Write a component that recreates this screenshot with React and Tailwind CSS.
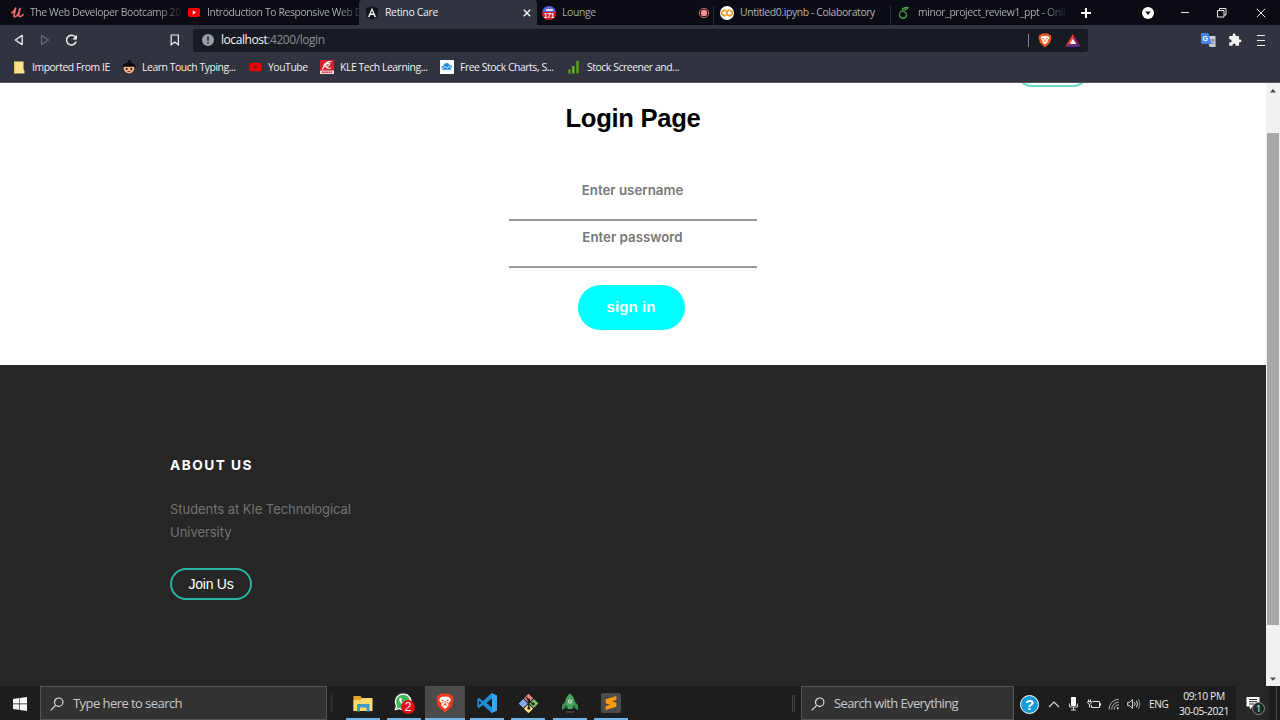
import React from "react";
import { SiGooglecolab, SiOverleaf, SiSublimetext } from "react-icons/si";
import { FaYoutube } from "react-icons/fa";

const UdemyIcon = () => (
  <svg viewBox="0 0 14 12" className="h-[11px] w-[13px]" fill="none" stroke="#f0666a" strokeWidth="1.9" strokeLinecap="round" strokeLinejoin="round">
    <path d="M1 6.200C2.600 5.400 4.400 3 4.900 1.300C4.600 4.400 1.800 10.600 4.200 10.600C6.400 10.600 8.600 6 9.800 1.600C8.700 5.500 7.300 10.400 9.600 10.400C11 10.400 12.200 9.400 13 8.400" />
  </svg>
);

const YoutubeIcon = () => (
  <svg viewBox="0 0 12 9" className="h-[9px] w-[12px]">
    <rect width="12" height="9" rx="2" fill="#f60000" />
    <path d="M4.800 2.600v3.800L8 4.500z" fill="#fff" />
  </svg>
);

const AngularIcon = () => (
  <svg viewBox="0 0 14 14" className="h-[14px] w-[14px]">
    <path d="M7 0l6.300 2.200-1 8.400L7 13.800l-5.300-3.200-1-8.400z" fill="#12161d" />
    <path d="M7 1.700L2.900 11h1.700l.85-2.100h3.100L9.400 11h1.700zm0 3l1.100 2.800H5.900z" fill="#f2f4f6" />
  </svg>
);

const LoungeIcon = () => (
  <span className="flex h-[14px] w-[14px] flex-col items-center overflow-hidden rounded-full bg-[#5b62e0]">
    <span className="mt-[3px] h-[2px] w-[7px] shrink-0 bg-[#dcdcff]" />
    <span className="mt-[1px] flex h-[8px] w-[14px] shrink-0 items-center justify-center bg-[#dc1118] font-['Liberation_Sans'] text-[7px] leading-none font-bold text-white">171</span>
  </span>
);

const ColabIcon = () => (
  <span className="flex h-[14px] w-[14px] items-center justify-center rounded-full bg-white">
    <SiGooglecolab className="h-[12px] w-[12px] text-[#f49a18]" />
  </span>
);

const RecordingDot = () => (
  <svg viewBox="0 0 12 12" className="h-[12px] w-[12px]">
    <circle cx="6" cy="6" r="4.700" fill="none" stroke="#d9706f" strokeWidth="1" />
    <circle cx="6" cy="6" r="3.200" fill="#fa8f8b" />
  </svg>
);

function Tab({ icon, label, width, pad, gap, fade = true, divider = true }) {
  return (
    <div className={`flex h-[25px] shrink-0 items-center ${width} ${pad} ${gap}`}>
      <span className="flex shrink-0">{icon}</span>
      <span
        className={
          fade
            ? "bg-linear-to-r from-[#b3b4bb] from-85% to-[#22232b] bg-clip-text whitespace-nowrap text-transparent"
            : "whitespace-nowrap text-[#b3b4bb]"
        }
      >
        {label}
      </span>
      {divider && <span className="mt-[6px] ml-auto h-[19px] w-px bg-[#2a2c37]" />}
    </div>
  );
}

function TabStrip() {
  return (
    <div className="flex h-[25px] bg-[#0a0b13] text-[10.4px] tracking-[-0.38px]">
      <Tab width="w-[181px]" pad="pl-[11px]" gap="gap-[6px]" icon={<UdemyIcon />} label="The Web Developer Bootcamp 20" />
      <Tab width="w-[178px]" pad="pl-[7px]" gap="gap-[7px]" icon={<YoutubeIcon />} label="Introduction To Responsive Web D" divider={false} />
      <div className="flex h-[25px] w-[178px] items-center gap-[6px] rounded-t-[3px] bg-[#31333f] pr-[6px] pl-[6px]">
        <AngularIcon />
        <span className="flex-1 tracking-[-0.3px] text-[#f1f1f4]">Retino Care</span>
        <svg viewBox="0 0 8 8" className="h-[8px] w-[8px]" stroke="#f5f5f7" strokeWidth="1.400">
          <path d="M.8.8l6.400 6.400M7.200.8L.8 7.200" />
        </svg>
      </div>
      <div className="flex h-[25px] w-[177px] items-center pl-[5px]">
        <LoungeIcon />
        <span className="ml-[6px] flex-1 text-[#a8a9b0]">Lounge</span>
        <RecordingDot />
        <span className="mt-[6px] ml-[3px] h-[19px] w-px bg-[#2a2c37]" />
      </div>
      <Tab width="w-[177px]" pad="pl-[6px]" gap="gap-[6px]" fade={false} icon={<ColabIcon />} label="Untitled0.ipynb - Colaboratory" />
      <Tab width="w-[178px]" pad="pl-[7px]" gap="gap-[8px]" icon={<SiOverleaf className="h-[12px] w-[12px] text-[#47a141]" />} label="minor_project_review1_ppt - Onli" />
      <div className="flex h-[25px] flex-1 items-center pl-[11px]">
        <svg viewBox="0 0 12 12" className="h-[12px] w-[12px]" stroke="#fff" strokeWidth="2">
          <path d="M6 1v10M1 6h10" />
        </svg>
        <svg viewBox="0 0 12 12" className="ml-[50px] h-[12px] w-[12px]">
          <circle cx="6" cy="6" r="6" fill="#fff" />
          <path d="M3.300 4.400h5.400L6 8z" fill="#0a0b13" />
        </svg>
        <span className="ml-[27px] h-px w-[8px] bg-[#e8e8ea]" />
        <svg viewBox="0 0 10 10" className="ml-[28px] h-[10px] w-[10px]" fill="none" stroke="#e8e8ea">
          <path d="M.5 2.500h6.500v6.500H.5zM2.500 2.500V.5h6.500v6.500H7" />
        </svg>
        <svg viewBox="0 0 10 10" className="ml-[29px] h-[10px] w-[10px]" stroke="#e8e8ea">
          <path d="M.8.8l8.400 8.400M9.200.8L.8 9.200" />
        </svg>
      </div>
    </div>
  );
}

function Toolbar() {
  return (
    <div className="flex h-[30px] items-center">
      <svg viewBox="0 0 10 12" className="ml-[14px] h-[12px] w-[10px]" fill="none" stroke="#eeeef2" strokeWidth="1.300" strokeLinejoin="round">
        <path d="M8.200 1.400v9.200L1.200 6z" />
      </svg>
      <svg viewBox="0 0 10 12" className="ml-[16px] h-[12px] w-[10px]" fill="none" stroke="#6c6e78" strokeWidth="1.200" strokeLinejoin="round">
        <path d="M1.500 1.400v9.200L8.500 6z" />
      </svg>
      <svg viewBox="0 0 13 12" className="ml-[15px] h-[12px] w-[13px]" fill="none" stroke="#eeeef2" strokeWidth="1.500">
        <path d="M11.200 7.500A4.900 4.900 0 1 1 10.200 2.800" />
        <path d="M12 .8v4.600H7.400z" fill="#eeeef2" stroke="none" />
      </svg>
      <svg viewBox="0 0 10 12" className="ml-[92px] h-[12px] w-[10px]" fill="none" stroke="#eeeef2" strokeWidth="1.200">
        <path d="M1.200 1h7.200v9.800L4.800 8l-3.600 2.800z" />
      </svg>
      <div className="ml-[13px] flex h-[23px] w-[895px] items-center rounded-[3px] bg-[#181b22] pl-[9px]">
        <svg viewBox="0 0 12 12" className="h-[12px] w-[12px]">
          <circle cx="6" cy="6" r="6" fill="#9b9da3" />
          <path d="M6 2.400v4.400M6 8v1.600" stroke="#23262e" strokeWidth="1.600" />
        </svg>
        <span className="ml-[7px] text-[12px] tracking-[-0.44px] text-[#8c8e94]"><span className="text-[#f4f4f6]">localhost</span>:4200/login</span>
        <span className="ml-auto h-[13px] w-px bg-[#85868b]" />
        <svg viewBox="0 0 14 15" className="ml-[9px] h-[15px] w-[14px]">
          <path d="M4 .5h6l1.300 1.300 1.600.4.500 2.100-1.300 5.500L7 14.500 1.900 9.800.6 4.300l.5-2.100 1.600-.4z" fill="#f15a22" />
          <path d="M7 3l3.300.2 1.100 1.800-1.900 2.500.2 1.500L7 11.600 4.300 9l.2-1.500L2.600 5l1.100-1.800z" fill="#fff" />
          <path d="M4.200 5.300l1.800.5M9.800 5.300L8 5.800M7 6v2.200M5.800 8.600L7 8.100l1.200.5" stroke="#f15a22" strokeWidth=".8" fill="none" />
        </svg>
        <svg viewBox="0 0 16 13" className="mr-[7px] ml-[13px] h-[13px] w-[16px]">
          <path d="M8 0L.3 12.700 8 7.500z" fill="#ff4a24" />
          <path d="M8 0l7.700 12.700L8 7.500z" fill="#9e1f63" />
          <path d="M.3 12.700h15.400L8 7.500z" fill="#662d91" />
          <path d="M8 4.700l3.200 5.200H4.800z" fill="#fff" />
        </svg>
      </div>
      <svg viewBox="0 0 15 14" className="ml-[113px] h-[14px] w-[15px]">
        <path d="M6 3h8.500v11H8.500z" fill="#c9ccd3" />
        <path d="M0 0h7.500l3 11H.8L0 10z" fill="#4a80e8" />
        <text x="1.600" y="8" fontSize="7" fontWeight="700" fill="#fff" fontFamily="Liberation Sans">G</text>
        <path d="M9.500 7h4M11.500 6v1M10 11c1.500-1 2.500-2.500 2.600-4M10.500 8.500l2.700 2.600" stroke="#66738a" strokeWidth=".8" fill="none" />
      </svg>
      <svg viewBox="0 0 24 24" className="ml-[12px] h-[14px] w-[14px]" fill="#f2f2f4">
        <path d="M20.500 11H19V7a2 2 0 0 0-2-2h-4V3.500a2.500 2.500 0 0 0-5 0V5H4a2 2 0 0 0-2 2v3.800h1.500a2.700 2.700 0 0 1 0 5.400H2V20a2 2 0 0 0 2 2h3.800v-1.500a2.700 2.700 0 0 1 5.400 0V22H17a2 2 0 0 0 2-2v-4h1.500a2.500 2.500 0 0 0 0-5z" />
      </svg>
      <div className="ml-[15px] flex w-[8px] flex-col gap-[4px]">
        <span className="h-px bg-[#eeeef2]" />
        <span className="h-px bg-[#eeeef2]" />
        <span className="h-px bg-[#eeeef2]" />
      </div>
    </div>
  );
}

const bookmarks = [
  {
    label: "Imported From IE",
    width: "w-[110px]",
    icon: (
      <svg viewBox="0 0 12 13" className="h-[13px] w-[12px]">
        <path d="M1 .5h9.500v8l1 .8v3.200H1z" fill="#ffe38a" />
        <path d="M1 .5h1.400v12H1z" fill="#eec45a" />
      </svg>
    ),
  },
  {
    label: "Learn Touch Typing...",
    width: "w-[126px]",
    icon: (
      <svg viewBox="0 0 14 14" className="h-[14px] w-[14px]">
        <circle cx="7.500" cy="1.600" r="1.600" fill="#08080a" />
        <path d="M0 7.500C.7 4.200 4 2.800 7 2.800s6.400 1.400 7 4.700z" fill="#08080a" />
        <path d="M1.700 6.800h10.600c.5 4-2 6.500-5.300 6.500S1.200 10.800 1.700 6.800z" fill="#f2b18a" />
        <circle cx="4.700" cy="9" r="1" fill="#111" />
        <circle cx="9.300" cy="9" r="1" fill="#111" />
        <path d="M5.500 11.500h3" stroke="#8c3030" />
      </svg>
    ),
  },
  { label: "YouTube", width: "w-[72px]", icon: <FaYoutube className="h-[14px] w-[13px] text-[#f60000]" /> },
  {
    label: "KLE Tech Learning...",
    width: "w-[120px]",
    icon: (
      <svg viewBox="0 0 14 14" className="h-[14px] w-[14px]">
        <rect width="14" height="14" fill="#d3232e" />
        <path d="M0 10.500h14V14H0z" fill="#f3dada" />
        <path d="M2 12.300h10" stroke="#c02030" strokeWidth="1.500" strokeDasharray="1.500 .7" />
        <path d="M11.500 1.500C8 1.200 4.500 3 4 5.200c-.3 1.800 2.800 1.500 4.500.3 1.300-1 1.800-2.300.4-2.400C7 3 3.500 6 2.500 9.500M6 7c1 1 3 1.500 5 1" stroke="#fff" strokeWidth="1.100" fill="none" />
      </svg>
    ),
  },
  {
    label: "Free Stock Charts, S...",
    width: "w-[127px]",
    icon: (
      <svg viewBox="0 0 14 14" className="h-[14px] w-[14px]">
        <rect width="14" height="14" rx=".6" fill="#fff" />
        <path d="M3.600 9.800a2 2 0 0 1-.2-4A3.400 3.400 0 0 1 9.800 5a2.500 2.500 0 0 1 .8 4.800z" fill="#1f8ceb" />
        <path d="M2 9l3-2.700L7 8.300l2.300-2 2.700 2.500" stroke="#fff" strokeWidth=".9" fill="none" />
      </svg>
    ),
  },
  {
    label: "Stock Screener and...",
    width: "w-[130px]",
    icon: (
      <svg viewBox="0 0 14 14" className="h-[14px] w-[14px]">
        <path d="M2.500 13.500V9.500" stroke="#5da51c" strokeWidth="2.300" />
        <path d="M6.300 13.500V6" stroke="#6cbb1e" strokeWidth="2.300" />
        <path d="M10.500 13.500V1" stroke="#57a018" strokeWidth="2.500" />
      </svg>
    ),
  },
];

function BookmarksBar() {
  return (
    <div className="flex h-[28px] items-center pb-[3px] pl-[12px] text-[10.4px] text-[#f0f0f3]">
      {bookmarks.map((b) => (
        <div key={b.label} className={`flex shrink-0 items-center gap-[6px] whitespace-nowrap tracking-[-0.44px] ${b.width}`}>
          <span className="flex w-[14px] shrink-0 justify-center">{b.icon}</span>
          {b.label}
        </div>
      ))}
    </div>
  );
}

function LoginPage() {
  return (
    <div className="flex flex-1 flex-col">
      <section className="flex h-[282px] flex-col bg-white">
        <div className="flex h-[4px] items-end overflow-hidden pl-[1016px]">
          <span className="h-[32px] w-[73px] shrink-0 rounded-full border-2 border-[#6ad6cc]" />
        </div>
        <h1 className="mt-[16px] text-center font-['Liberation_Sans'] text-[25.6px] leading-[30px] font-bold tracking-[-0.3px] text-black">Login Page</h1>
        <form className="mt-[47px] flex flex-col items-center pr-[1px] font-['Inter'] text-[13.3px] font-semibold">
          <div className="flex h-[41px] w-[248px] items-start justify-center border-b-2 border-[#9a9a9a] pt-[1px] text-[#777]">Enter username</div>
          <div className="mt-[6px] flex h-[41px] w-[248px] items-start justify-center border-b-2 border-[#9a9a9a] pt-[1px] text-[#777]">Enter password</div>
          <div className="mt-[17px] mr-[3px] flex h-[45px] w-[107px] items-center justify-center rounded-full bg-[#00ffff] font-['Liberation_Sans'] text-[15.2px] font-bold text-white">sign in</div>
        </form>
      </section>
      <footer className="flex flex-1 flex-col items-start bg-[#262626] pt-[89px] pl-[170px]">
        <h3 className="font-['Inter'] text-[13.7px] leading-[22px] font-bold tracking-[1.45px] text-white">ABOUT US</h3>
        <p className="mt-[22px] w-[200px] font-['Inter'] text-[13px] leading-[23px] tracking-[-0.04px] text-[#737373]">
          Students at Kle Technological University
        </p>
        <div className="mt-[24px] flex h-[32px] w-[82px] items-center justify-center rounded-full border-2 border-[#27b3a4] font-['Liberation_Sans'] text-[14px] tracking-[-0.25px] text-white">Join Us</div>
      </footer>
    </div>
  );
}

function Scrollbar() {
  return (
    <div className="flex w-[14px] flex-col items-center bg-[#f1f1f1]">
      <svg viewBox="0 0 14 14" className="h-[14px] w-[14px]">
        <path d="M4 9.500l3-3.500 3 3.500z" fill="#4a4a4a" />
      </svg>
      <div className="mt-[36px] h-[492px] w-[12px] bg-[#a8a8a8]" />
      <svg viewBox="0 0 14 14" className="mt-auto h-[14px] w-[14px]">
        <path d="M4 5.500h6L7 8.800z" fill="#4a4a4a" />
      </svg>
    </div>
  );
}

const SearchIcon = () => (
  <svg viewBox="0 0 14 14" className="h-[14px] w-[14px] shrink-0" fill="none" stroke="#dedede" strokeWidth="1.200">
    <circle cx="8.700" cy="5.200" r="4.200" />
    <path d="M5.700 8.300L.7 13.300" />
  </svg>
);

const apps = [
  {
    name: "explorer",
    box: "ml-[13px] w-[34px]",
    icon: (
      <svg viewBox="0 0 20 17" className="h-[17px] w-[20px]">
        <path d="M.5 1h7l1.500 2H19v13H.5z" fill="#e3a72c" />
        <path d="M.5 5L8 5l1.500-2H19.500v13H.5z" fill="#ffd969" />
        <path d="M4 16.500V9h12.500v7.500h-3V12.500h-6.500v4z" fill="#3f9ad2" />
      </svg>
    ),
  },
  {
    name: "whatsapp",
    box: "ml-[7px] w-[34px]",
    icon: (
      <span className="relative flex h-[20px] w-[20px]">
        <svg viewBox="0 0 20 20" className="h-[18px] w-[18px]">
          <path d="M.5 19.500l1.500-5.200A9.400 9.400 0 1 1 5.600 18z" fill="#fff" />
          <path d="M2.600 17.400l1-3.500A7.700 7.700 0 1 1 6.300 16.400z" fill="#3dba58" />
          <path d="M6.600 5.500c1-.9 1.400 0 2 1.600.2.700-.8 1.200-.6 1.700.7 1.300 1.900 2.300 3.200 2.800.6 0 .9-1.200 1.500-1 1.900.9 2 1 1.600 1.900-2.800 3.700-11.300-4.200-7.700-7z" fill="#fff" />
        </svg>
        <span className="absolute top-[7px] left-[7px] flex h-[14px] w-[14px] items-center justify-center rounded-full bg-[#e90b16] font-['Liberation_Sans'] text-[12px] leading-none text-white">2</span>
      </span>
    ),
  },
  {
    name: "brave",
    box: "ml-[4px] w-[40px] bg-[#4b4b4b]",
    icon: (
      <svg viewBox="0 0 18 20" className="h-[20px] w-[18px]">
        <path d="M5 .5h8l1.700 1.700 2 .4.800 2.700-1.500 8.200L9 19.500 2 13.500.5 5.300l.8-2.700 2-.4z" fill="#ee3d1e" />
        <path d="M9 3.500l4 .4L15 7l-2.700 3.600.3 1.800L9 16l-3.600-3.600.3-1.800L3 7l2-3.100z" fill="#fff" />
        <path d="M5.300 7l2.500.9M12.700 7l-2.500.9M9 8v3.700M7 12.400l2-.9 2 .9M6 9l1 1.500M12 9l-1 1.500" stroke="#ee3d1e" strokeWidth="1" fill="none" />
      </svg>
    ),
  },
  {
    name: "vscode",
    box: "ml-[5px] w-[34px]",
    icon: (
      <svg viewBox="0 0 20 20" className="h-[20px] w-[20px]">
        <path d="M14.500 0L20 2.500v15L14.500 20 6 11.900l-3.800 3L.3 14V6l1.900-.9L6 8.100zM15 5.500L9.500 10l5.500 4.500zM2 7.700v4.600L4.300 10z" fill="#2089d4" fillRule="evenodd" />
        <path d="M14.500 0L20 2.500v15L14.500 20l.5-5.500v-9z" fill="#36a7ef" />
      </svg>
    ),
  },
  {
    name: "git",
    box: "ml-[7px] w-[34px]",
    icon: (
      <svg viewBox="0 0 22 22" className="h-[21px] w-[21px]">
        <path d="M11 .7l4.800 4.800L11 10.300 6.200 5.500z" fill="#f28482" />
        <path d="M5.500 6.200l4.800 4.800-4.800 4.800L.7 11z" fill="#86a8ef" />
        <path d="M16.500 6.200l4.800 4.800-4.800 4.800-4.800-4.800z" fill="#7bc86a" />
        <path d="M11 11.700l4.800 4.800L11 21.300l-4.800-4.800z" fill="#ffe27b" />
        <path d="M8.500 4l2.800 3.500v8.500M11.500 8l4 3.500" stroke="#1f1f1f" strokeWidth="1.300" fill="none" />
        <circle cx="11.300" cy="7.300" r="1.500" fill="#1f1f1f" />
        <circle cx="16" cy="11.500" r="1.500" fill="#1f1f1f" />
        <circle cx="11.300" cy="16" r="1.500" fill="#1f1f1f" />
      </svg>
    ),
  },
  {
    name: "rocket",
    box: "ml-[8px] w-[34px]",
    icon: (
      <svg viewBox="0 0 18 20" className="h-[20px] w-[18px]">
        <path d="M4.500 8.500L1 12v5l3.500-2zM13.500 8.500L17 12v5l-3.500-2z" fill="#3a9152" />
        <path d="M9 .5c3.500 2.700 5.300 7 4.800 11l-2.100 4.500H6.300l-2.100-4.500C3.700 7.500 5.500 3.200 9 .5z" fill="#48a45f" />
        <circle cx="9" cy="8.500" r="2" fill="#dcebdd" />
        <circle cx="9" cy="8.500" r="1" fill="#48a45f" />
        <path d="M5.500 12.500l1 3.500M12.500 12.500l-1 3.500" stroke="#244e31" />
        <path d="M5 19h8" stroke="#555" />
      </svg>
    ),
  },
  {
    name: "sublime",
    box: "ml-[7px] w-[34px]",
    icon: (
      <span className="flex h-[20px] w-[20px] items-center justify-center rounded-[2px] bg-[#4b4b4b]">
        <SiSublimetext className="h-[14px] w-[14px] text-[#ff9b0b]" />
      </span>
    ),
  },
];

function Taskbar() {
  return (
    <div className="flex h-[34px] items-stretch bg-[#1d1d1d] font-['Open_Sans']">
      <div className="flex w-[40px] items-center justify-center pt-[1px]">
        <svg viewBox="0 0 14 14" className="h-[14px] w-[14px]" fill="#f4f4f4">
          <path d="M0 2l6-.9v5.500H0zM6.600 1L14 0v6.600H6.600zM0 7.200h6v5.500L0 11.900zM6.600 7.200H14V14l-7.400-1.100z" />
        </svg>
      </div>
      <div className="flex w-[287px] items-center gap-[9px] border border-[#555] bg-[#323232] pt-[2px] pl-[9px] text-[13px] tracking-[-0.56px] text-[#c9c9c9]">
        <SearchIcon />
        Type here to search
      </div>
      <span className="ml-[3px] h-[17px] w-[3px] self-center bg-[#2c2c2c]" />
      {apps.map((a) => (
        <div key={a.name} className={`flex shrink-0 flex-col items-center ${a.box}`}>
          <span className="flex flex-1 items-center pt-[2px]">{a.icon}</span>
          <span className="h-[2px] w-full bg-[#76b3e5]" />
        </div>
      ))}
      <span className="ml-[164px] h-[17px] w-[3px] self-center border-x border-[#444]" />
      <div className="ml-[6px] flex w-[213px] shrink-0 items-center gap-[9px] border border-[#555] bg-[#323232] pt-[2px] pl-[9px] text-[13px] tracking-[-0.62px] text-[#c9c9c9]">
        <SearchIcon />
        Search with Everything
      </div>
      <div className="flex flex-1 items-center pt-[2px] pl-[6px]">
        <span className="flex h-[19px] w-[19px] shrink-0 items-center justify-center rounded-full border-[1.500px] border-white bg-[#159bd7] font-['Liberation_Sans'] text-[15px] leading-none font-bold text-white">?</span>
        <svg viewBox="0 0 12 7" className="ml-[9px] h-[7px] w-[12px] shrink-0" fill="none" stroke="#dedede" strokeWidth="1.100">
          <path d="M1 6l5-5 5 5" />
        </svg>
        <svg viewBox="0 0 9 14" className="ml-[9px] h-[14px] w-[9px] shrink-0">
          <rect x="2" y="0" width="5" height="9" rx=".7" fill="#fff" />
          <path d="M.6 6.500v3.500h7.800V6.500M4.500 10v3M2 13h5" stroke="#dedede" fill="none" />
        </svg>
        <svg viewBox="0 0 14 10" className="ml-[9px] h-[10px] w-[14px] shrink-0" fill="none" stroke="#e4e4e4" strokeWidth="1">
          <path d="M5.500 2.500h7v6H4.500V6M12.500 4.500h1v2h-1M1.500.5v2M3.500.5v2M.8 2.500h3.400v1.700L2.500 5.500.8 4.200zM2.500 5.500v3" />
        </svg>
        <svg viewBox="0 0 12 12" className="ml-[7px] h-[12px] w-[12px] shrink-0" fill="none" stroke="#b5b5b5" strokeWidth="1">
          <path d="M1 11.500A10 10 0 0 1 10.800 1.200M3.700 11.500A7.500 7.500 0 0 1 10.800 4M6.300 11.500A5 5 0 0 1 10.800 6.700" />
          <circle cx="9.800" cy="10.300" r="1" fill="#e4e4e4" stroke="none" />
        </svg>
        <svg viewBox="0 0 14 12" className="ml-[7px] h-[12px] w-[14px] shrink-0" fill="none" stroke="#dedede" strokeWidth="1">
          <path d="M.7 4.300h2L5.500 1.700v8.600L2.700 7.700h-2zM7.500 4.300q1 1.700 0 3.400M9.500 2.700q2 3.300 0 6.600" />
          <path d="M11.500 1.200q2.700 4.800 0 9.600" stroke="#8a8a8a" />
        </svg>
        <span className="ml-[8px] w-[20px] text-[10px] tracking-[-0.25px] text-[#eee]">ENG</span>
        <span className="ml-[8px] flex w-[54px] flex-col items-center text-[10.300px] leading-[15px] tracking-[-0.35px] whitespace-nowrap text-[#eee]">
          <span>09:10 PM</span>
          <span>30-05-2021</span>
        </span>
      </div>
      <div className="flex w-[33px] shrink-0 items-center bg-[#272727] pt-[2px] pl-[10px]">
        <span className="relative flex h-[17px] w-[20px]">
          <svg viewBox="0 0 14 14" className="h-[14px] w-[14px]">
            <path d="M.5 1h13v9.500H6.500L3.800 13.500v-3H.5z" fill="#fff" />
            <path d="M3 3.500h8M3 5.700h8M3 8h5" stroke="#272727" />
          </svg>
          <span className="absolute top-[6px] left-[6px] flex h-[13px] w-[13px] items-center justify-center rounded-full border border-[#8a8a8a] bg-[#272727] text-[9px] leading-none text-white">1</span>
        </span>
      </div>
      <span className="mr-[3px] ml-[7px] w-px bg-[#4a4a4a]" />
    </div>
  );
}

export default function App() {
  return (
    <div className="flex h-[720px] w-[1280px] flex-col overflow-hidden bg-[#262626] font-['Open_Sans',sans-serif]">
      <header className="h-[83px] border-b border-[#54565f] bg-[#31333f]">
        <TabStrip />
        <Toolbar />
        <BookmarksBar />
      </header>
      <main className="flex flex-1">
        <LoginPage />
        <Scrollbar />
      </main>
      <Taskbar />
    </div>
  );
}
